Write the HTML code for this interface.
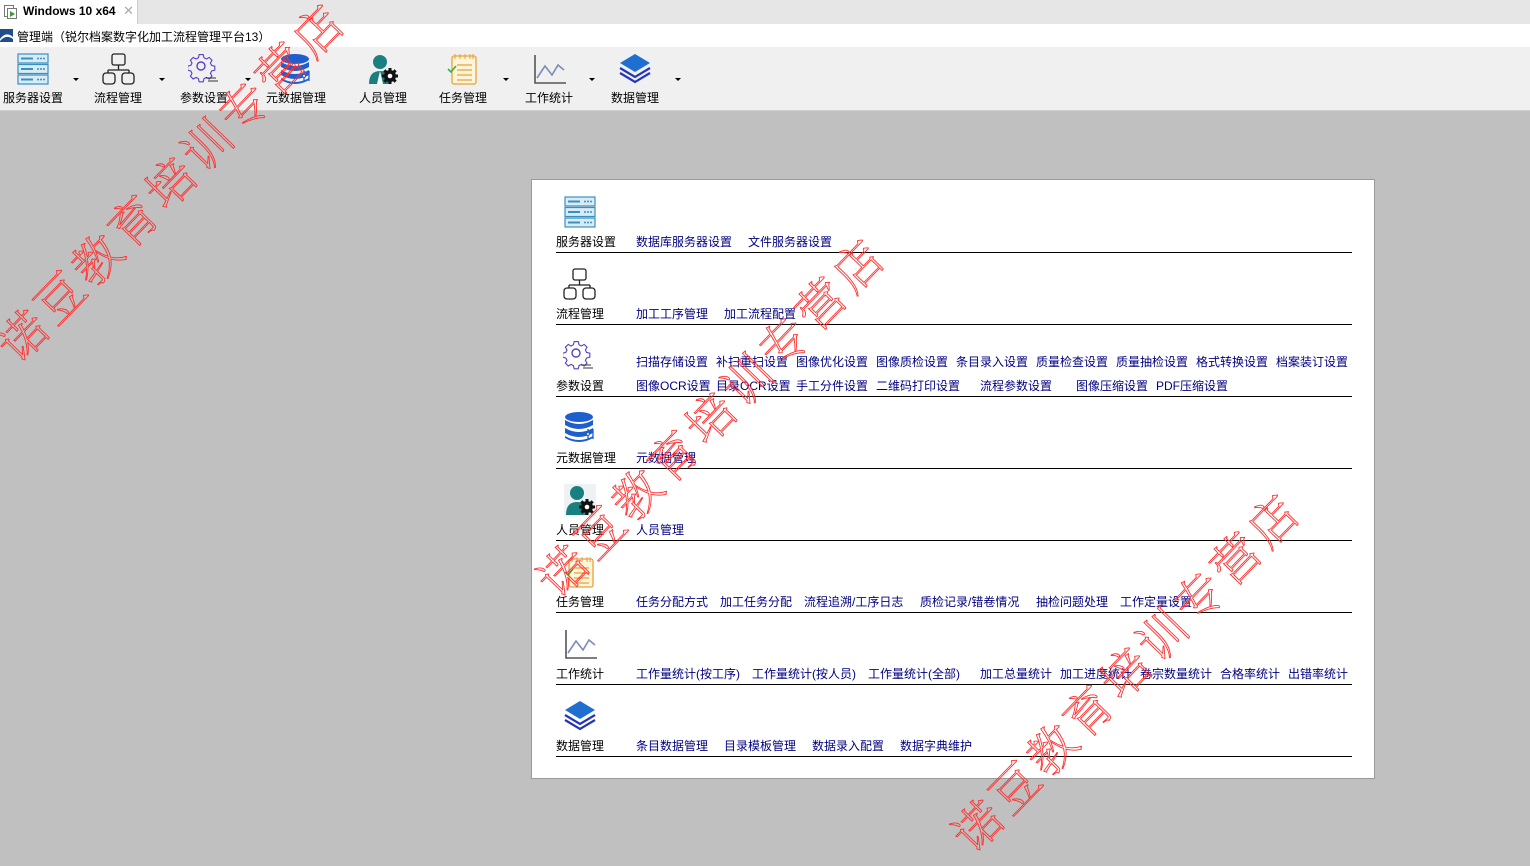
<!DOCTYPE html>
<html><head><meta charset="utf-8">
<style>
*{margin:0;padding:0;box-sizing:border-box}
body{width:1530px;height:840px;overflow:hidden;background:#c0c0c0;font-family:"Liberation Sans","Noto Sans CJK SC",sans-serif;font-size:12px;position:relative;color:#000}
.abs{position:absolute;white-space:nowrap}
#tabbar{left:0;top:0;width:1530px;height:24px;background:#e6e6e6}
#tab{left:0;top:0;width:138px;height:24px;background:#fff;border-right:1px solid #ccc}
#title{left:0;top:24px;width:1530px;height:23px;background:#fff}
#tb{left:0;top:47px;width:1530px;height:64px;background:#f0f0f0;border-bottom:1px solid #d0d0d0}
.tl{font-size:12px;color:#000}
.arr{width:0;height:0;border-left:3px solid transparent;border-right:3px solid transparent;border-top:3px solid #000}
#panel{left:531px;top:179px;width:844px;height:600px;background:#fff;border:1px solid #9a9a9a}
.ln{height:1px;background:#000;left:556px;width:796px}
.lk{color:#000080;font-size:12px}
.lb{color:#000;font-size:12px}
.wm{font-family:"Noto Serif CJK SC","WenQuanYi Zen Hei",serif;font-size:48px;font-weight:200;color:transparent;-webkit-text-stroke:0.9px #ff3030;letter-spacing:5px;transform-origin:center;white-space:nowrap}
</style></head><body>
<div class="abs" id="tabbar"></div>
<div class="abs" id="tab"></div>
<svg class="abs" style="left:4px;top:5px" width="14" height="14"><rect x="0.5" y="0.5" width="9" height="11" fill="#fff" stroke="#777"/><rect x="3.5" y="3.5" width="9" height="10" fill="#fff" stroke="#777"/><path d="M6 6 L11 9 L6 12Z" fill="#3a9a3a"/></svg>
<div class="abs" style="left:23px;top:4px;font-weight:bold;font-size:12px">Windows 10 x64</div>
<div class="abs" style="left:123px;top:3px;color:#aaa;font-size:13px">✕</div>
<div class="abs" id="title"></div>
<svg class="abs" style="left:0;top:29px" width="13" height="13"><rect width="13" height="13" fill="#1f4e8a"/><path d="M0 10 Q6 2 13 8 L13 10 Q6 5 0 12Z" fill="#fff"/></svg>
<div class="abs" style="left:17px;top:28px;font-size:12px">管理端（锐尔档案数字化加工流程管理平台13）</div>
<div class="abs" id="tb"></div>

<svg class="abs" style="left:17px;top:53px" width="32" height="32"><g fill="#d8ecf6" stroke="#3b8fbf" stroke-width="1.2"><rect x="1" y="1" width="30" height="9"/><rect x="1" y="11.5" width="30" height="9"/><rect x="1" y="22" width="30" height="9"/></g><g fill="#3b8fbf"><rect x="4" y="4.5" width="12" height="2"/><rect x="4" y="15" width="12" height="2"/><rect x="4" y="25.5" width="12" height="2"/><circle cx="21" cy="5.5" r="1"/><circle cx="24" cy="5.5" r="1"/><circle cx="27" cy="5.5" r="1"/><circle cx="21" cy="16" r="1"/><circle cx="24" cy="16" r="1"/><circle cx="27" cy="16" r="1"/><circle cx="21" cy="26.5" r="1"/><circle cx="24" cy="26.5" r="1"/><circle cx="27" cy="26.5" r="1"/></g></svg>
<svg class="abs" style="left:102px;top:53px" width="34" height="32"><g fill="none" stroke="#222" stroke-width="1.3"><rect x="10" y="1" width="13" height="11" rx="2"/><path d="M16.5 12V17M6 17H27M6 17V20M27 17V20"/><rect x="1" y="20" width="12" height="11" rx="3"/><rect x="20" y="20" width="12" height="11" rx="3"/></g></svg>
<svg class="abs" style="left:188px;top:53px" width="32" height="32"><g fill="none" stroke="#5a3fc8" stroke-width="1.4"><path d="M13 2h5l1 4 3 1.5 3.5-2 3.5 3.5-2 3.5 1.5 3 4 1v5l-4 1-1.5 3 2 3.5-3.5 3.5-3.5-2-3 1.5-1 4h-5l-1-4-3-1.5-3.5 2-3.5-3.5 2-3.5-1.5-3-4-1v-5l4-1 1.5-3-2-3.5 3.5-3.5 3.5 2 3-1.5z" transform="scale(0.8) translate(1,0)"/><circle cx="13" cy="13" r="4"/></g><path d="M18 25h10M20 28h10" stroke="#333" stroke-width="1"/></svg>
<svg class="abs" style="left:280px;top:53px" width="34" height="32"><g fill="#1e5fd0"><ellipse cx="15" cy="6" rx="14" ry="5"/><path d="M1 9q14 8 28 0v5q-14 8-28 0z"/><path d="M1 17q14 8 28 0v5q-14 8-28 0z"/><path d="M1 25q14 8 28 0v2q-14 8-28 0z"/></g><path d="M24 18v10M29 18v10" stroke="#1e5fd0" stroke-width="1.3"/><circle cx="24" cy="23" r="1.5" fill="#fff" stroke="#1e5fd0"/></svg>
<svg class="abs" style="left:367px;top:53px" width="32" height="32"><circle cx="13" cy="9" r="7" fill="#1a7f80"/><path d="M2 31q0-13 11-13q7 0 9 4v9z" fill="#1a7f80"/><path d="M13 18l-3 13h6z" fill="#fff"/><g transform="translate(23,23)"><path d="M-1.5-8h3v16h-3zM-8-1.5h16v3h-16z" fill="#111" transform="rotate(45)"/><path d="M-1.5-8h3v16h-3zM-8-1.5h16v3h-16z" fill="#111"/><circle r="6" fill="#111"/><circle r="2.3" fill="#fff"/></g></svg>
<svg class="abs" style="left:447px;top:53px" width="32" height="32"><rect x="5" y="3" width="24" height="28" rx="2" fill="#fff5d8" stroke="#e8a040" stroke-width="1.3"/><path d="M8 1v5M13 1v5M18 1v5M23 1v5M26 1v5" stroke="#e8a040"/><path d="M10 12h15M10 17h15M10 22h15M10 27h15" stroke="#e8a040" stroke-width="1.3"/><path d="M1 16l3 3 5-6" stroke="#3bb04a" stroke-width="1.6" fill="none"/></svg>
<svg class="abs" style="left:533px;top:53px" width="34" height="32"><path d="M2 2V30H33" stroke="#555" stroke-width="1.6" fill="none"/><path d="M4 25l8-12 7 9 6-10 6 5" stroke="#7a8cb8" stroke-width="1.6" fill="none"/></svg>
<svg class="abs" style="left:619px;top:53px" width="32" height="32"><path d="M16 1L31 10L16 19L1 10Z" fill="#1e6fd0"/><path d="M1 15l15 9 15-9M1 20l15 9 15-9" stroke="#2436b8" stroke-width="2.2" fill="none"/></svg>

<div class="abs tl" style="left:3px;top:89px">服务器设置</div>
<div class="abs tl" style="left:94px;top:89px">流程管理</div>
<div class="abs tl" style="left:180px;top:89px">参数设置</div>
<div class="abs tl" style="left:266px;top:89px">元数据管理</div>
<div class="abs tl" style="left:359px;top:89px">人员管理</div>
<div class="abs tl" style="left:439px;top:89px">任务管理</div>
<div class="abs tl" style="left:525px;top:89px">工作统计</div>
<div class="abs tl" style="left:611px;top:89px">数据管理</div>
<div class="abs arr" style="left:73px;top:78px"></div>
<div class="abs arr" style="left:159px;top:78px"></div>
<div class="abs arr" style="left:245px;top:78px"></div>
<div class="abs arr" style="left:503px;top:78px"></div>
<div class="abs arr" style="left:589px;top:78px"></div>
<div class="abs arr" style="left:675px;top:78px"></div>

<div class="abs" id="panel"></div>

<svg class="abs" style="left:564px;top:196px" width="32" height="32"><g fill="#d8ecf6" stroke="#3b8fbf" stroke-width="1.2"><rect x="1" y="1" width="30" height="9"/><rect x="1" y="11.5" width="30" height="9"/><rect x="1" y="22" width="30" height="9"/></g><g fill="#3b8fbf"><rect x="4" y="4.5" width="12" height="2"/><rect x="4" y="15" width="12" height="2"/><rect x="4" y="25.5" width="12" height="2"/><circle cx="21" cy="5.5" r="1"/><circle cx="24" cy="5.5" r="1"/><circle cx="27" cy="5.5" r="1"/><circle cx="21" cy="16" r="1"/><circle cx="24" cy="16" r="1"/><circle cx="27" cy="16" r="1"/><circle cx="21" cy="26.5" r="1"/><circle cx="24" cy="26.5" r="1"/><circle cx="27" cy="26.5" r="1"/></g></svg>
<svg class="abs" style="left:563px;top:268px" width="34" height="32"><g fill="none" stroke="#222" stroke-width="1.3"><rect x="10" y="1" width="13" height="11" rx="2"/><path d="M16.5 12V17M6 17H27M6 17V20M27 17V20"/><rect x="1" y="20" width="12" height="11" rx="3"/><rect x="20" y="20" width="12" height="11" rx="3"/></g></svg>
<svg class="abs" style="left:563px;top:340px" width="32" height="32"><g fill="none" stroke="#5a3fc8" stroke-width="1.4"><path d="M13 2h5l1 4 3 1.5 3.5-2 3.5 3.5-2 3.5 1.5 3 4 1v5l-4 1-1.5 3 2 3.5-3.5 3.5-3.5-2-3 1.5-1 4h-5l-1-4-3-1.5-3.5 2-3.5-3.5 2-3.5-1.5-3-4-1v-5l4-1 1.5-3-2-3.5 3.5-3.5 3.5 2 3-1.5z" transform="scale(0.8) translate(1,0)"/><circle cx="13" cy="13" r="4"/></g><path d="M18 25h10M20 28h10" stroke="#333" stroke-width="1"/></svg>
<svg class="abs" style="left:564px;top:411px" width="34" height="32"><g fill="#1e5fd0"><ellipse cx="15" cy="6" rx="14" ry="5"/><path d="M1 9q14 8 28 0v5q-14 8-28 0z"/><path d="M1 17q14 8 28 0v5q-14 8-28 0z"/><path d="M1 25q14 8 28 0v2q-14 8-28 0z"/></g><path d="M24 18v10M29 18v10" stroke="#1e5fd0" stroke-width="1.3"/><circle cx="24" cy="23" r="1.5" fill="#fff" stroke="#1e5fd0"/></svg>
<svg class="abs" style="left:564px;top:484px" width="32" height="32"><rect width="32" height="32" fill="#eef2f4"/><circle cx="13" cy="9" r="7" fill="#1a7f80"/><path d="M2 31q0-13 11-13q7 0 9 4v9z" fill="#1a7f80"/><g transform="translate(23,23)"><path d="M-1.5-8h3v16h-3zM-8-1.5h16v3h-16z" fill="#111" transform="rotate(45)"/><path d="M-1.5-8h3v16h-3zM-8-1.5h16v3h-16z" fill="#111"/><circle r="6" fill="#111"/><circle r="2.3" fill="#fff"/></g></svg>
<svg class="abs" style="left:564px;top:556px" width="32" height="32"><rect x="5" y="3" width="24" height="28" rx="2" fill="#fff5d8" stroke="#e8a040" stroke-width="1.3"/><path d="M8 1v5M13 1v5M18 1v5M23 1v5M26 1v5" stroke="#e8a040"/><path d="M10 12h15M10 17h15M10 22h15M10 27h15" stroke="#e8a040" stroke-width="1.3"/><path d="M1 16l3 3 5-6" stroke="#3bb04a" stroke-width="1.6" fill="none"/></svg>
<svg class="abs" style="left:564px;top:628px" width="34" height="32"><path d="M2 2V30H33" stroke="#555" stroke-width="1.6" fill="none"/><path d="M4 25l8-12 7 9 6-10 6 5" stroke="#7a8cb8" stroke-width="1.6" fill="none"/></svg>
<svg class="abs" style="left:564px;top:700px" width="32" height="32"><path d="M16 1L31 10L16 19L1 10Z" fill="#1e6fd0"/><path d="M1 15l15 9 15-9M1 20l15 9 15-9" stroke="#2436b8" stroke-width="2.2" fill="none"/></svg>

<div class="abs ln" style="top:252px"></div>
<div class="abs ln" style="top:324px"></div>
<div class="abs ln" style="top:396px"></div>
<div class="abs ln" style="top:468px"></div>
<div class="abs ln" style="top:540px"></div>
<div class="abs ln" style="top:612px"></div>
<div class="abs ln" style="top:684px"></div>
<div class="abs ln" style="top:756px"></div>

<div class="abs lb" style="left:556px;top:233px">服务器设置</div>
<div class="abs lk" style="left:636px;top:233px">数据库服务器设置</div>
<div class="abs lk" style="left:748px;top:233px">文件服务器设置</div>

<div class="abs lb" style="left:556px;top:305px">流程管理</div>
<div class="abs lk" style="left:636px;top:305px">加工工序管理</div>
<div class="abs lk" style="left:724px;top:305px">加工流程配置</div>

<div class="abs lk" style="left:636px;top:353px">扫描存储设置</div>
<div class="abs lk" style="left:716px;top:353px">补扫重扫设置</div>
<div class="abs lk" style="left:796px;top:353px">图像优化设置</div>
<div class="abs lk" style="left:876px;top:353px">图像质检设置</div>
<div class="abs lk" style="left:956px;top:353px">条目录入设置</div>
<div class="abs lk" style="left:1036px;top:353px">质量检查设置</div>
<div class="abs lk" style="left:1116px;top:353px">质量抽检设置</div>
<div class="abs lk" style="left:1196px;top:353px">格式转换设置</div>
<div class="abs lk" style="left:1276px;top:353px">档案装订设置</div>
<div class="abs lb" style="left:556px;top:377px">参数设置</div>
<div class="abs lk" style="left:636px;top:377px">图像OCR设置</div>
<div class="abs lk" style="left:716px;top:377px">目录OCR设置</div>
<div class="abs lk" style="left:796px;top:377px">手工分件设置</div>
<div class="abs lk" style="left:876px;top:377px">二维码打印设置</div>
<div class="abs lk" style="left:980px;top:377px">流程参数设置</div>
<div class="abs lk" style="left:1076px;top:377px">图像压缩设置</div>
<div class="abs lk" style="left:1156px;top:377px">PDF压缩设置</div>

<div class="abs lb" style="left:556px;top:449px">元数据管理</div>
<div class="abs lk" style="left:636px;top:449px">元数据管理</div>

<div class="abs lb" style="left:556px;top:521px">人员管理</div>
<div class="abs lk" style="left:636px;top:521px">人员管理</div>

<div class="abs lb" style="left:556px;top:593px">任务管理</div>
<div class="abs lk" style="left:636px;top:593px">任务分配方式</div>
<div class="abs lk" style="left:720px;top:593px">加工任务分配</div>
<div class="abs lk" style="left:804px;top:593px">流程追溯/工序日志</div>
<div class="abs lk" style="left:920px;top:593px">质检记录/错卷情况</div>
<div class="abs lk" style="left:1036px;top:593px">抽检问题处理</div>
<div class="abs lk" style="left:1120px;top:593px">工作定量设置</div>

<div class="abs lb" style="left:556px;top:665px">工作统计</div>
<div class="abs lk" style="left:636px;top:665px">工作量统计(按工序)</div>
<div class="abs lk" style="left:752px;top:665px">工作量统计(按人员)</div>
<div class="abs lk" style="left:868px;top:665px">工作量统计(全部)</div>
<div class="abs lk" style="left:980px;top:665px">加工总量统计</div>
<div class="abs lk" style="left:1060px;top:665px">加工进度统计</div>
<div class="abs lk" style="left:1140px;top:665px">卷宗数量统计</div>
<div class="abs lk" style="left:1220px;top:665px">合格率统计</div>
<div class="abs lk" style="left:1288px;top:665px">出错率统计</div>

<div class="abs lb" style="left:556px;top:737px">数据管理</div>
<div class="abs lk" style="left:636px;top:737px">条目数据管理</div>
<div class="abs lk" style="left:724px;top:737px">目录模板管理</div>
<div class="abs lk" style="left:812px;top:737px">数据录入配置</div>
<div class="abs lk" style="left:900px;top:737px">数据字典维护</div>

<div class="abs wm" style="left:-70px;top:145px;width:480px;text-align:center;transform:rotate(-46deg)">诺豆教育培训专营店</div>
<div class="abs wm" style="left:470px;top:380px;width:480px;text-align:center;transform:rotate(-46deg)">诺豆教育培训专营店</div>
<div class="abs wm" style="left:885px;top:635px;width:480px;text-align:center;transform:rotate(-46deg)">诺豆教育培训专营店</div>
</body></html>
